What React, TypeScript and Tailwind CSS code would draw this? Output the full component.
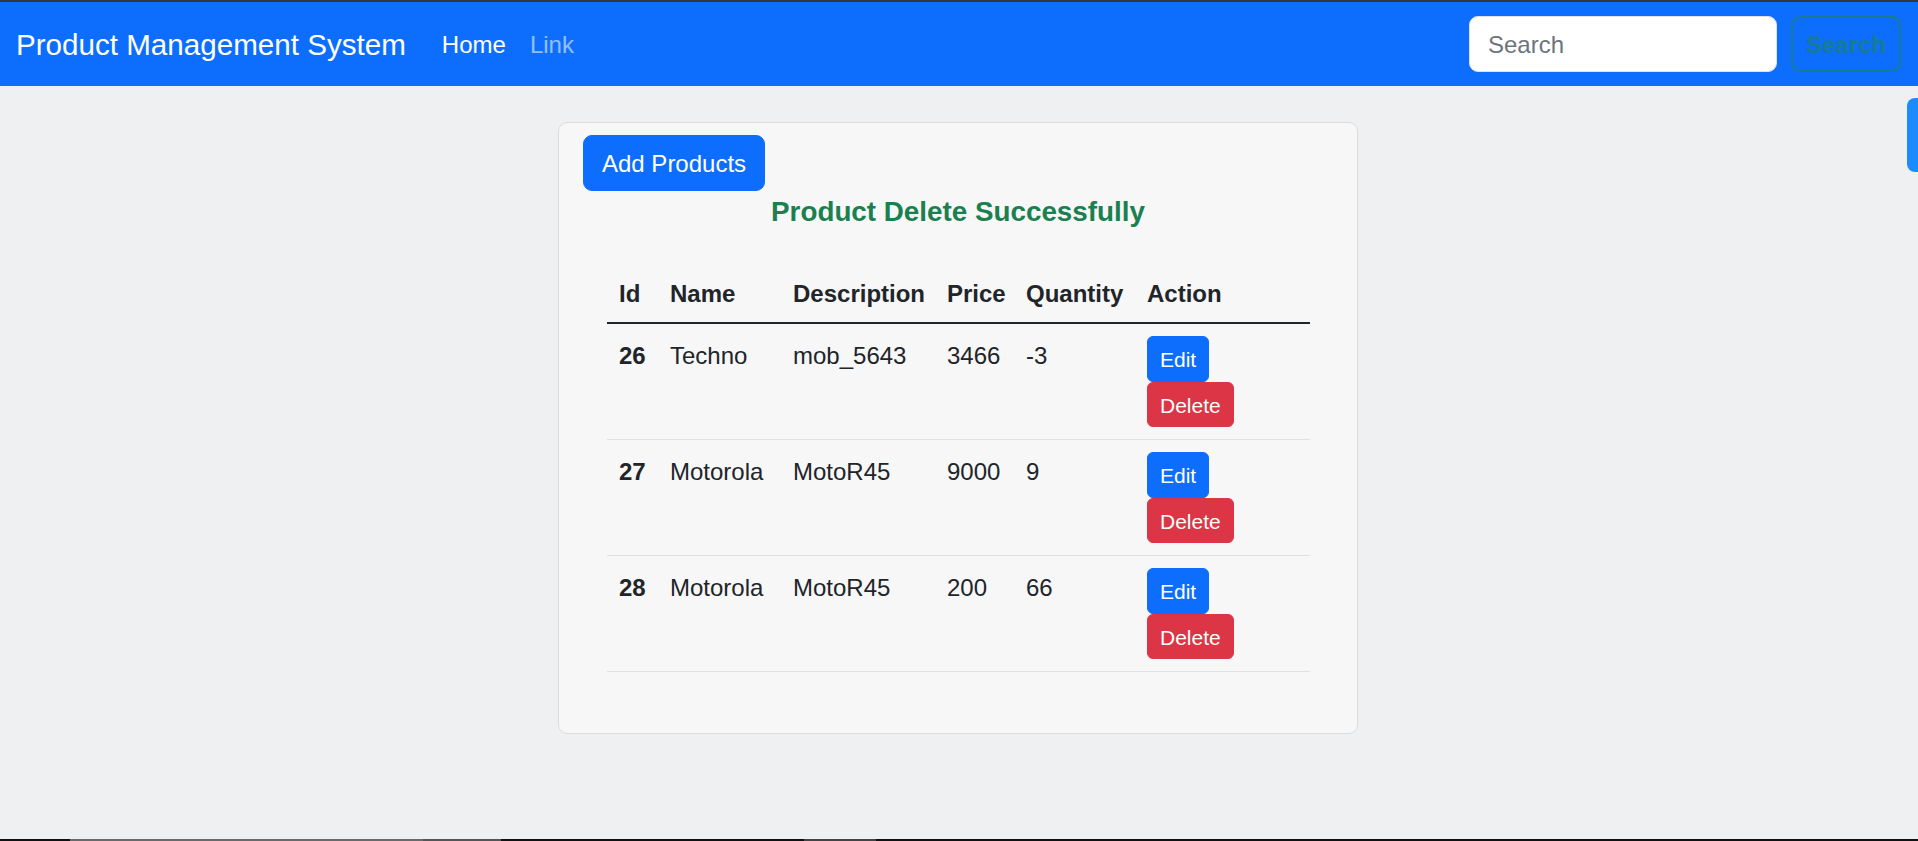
import React from "react";

type Product = {
  id: number;
  name: string;
  description: string;
  price: number;
  quantity: number;
};

const products: Product[] = [
  { id: 26, name: "Techno", description: "mob_5643", price: 3466, quantity: -3 },
  { id: 27, name: "Motorola", description: "MotoR45", price: 9000, quantity: 9 },
  { id: 28, name: "Motorola", description: "MotoR45", price: 200, quantity: 66 },
];

export default function App() {
  return (
    <div className="relative min-h-screen bg-[#eff0f2] font-['Liberation_Sans',Arial,sans-serif] text-[24px] leading-[1.5] text-[#212529]">
      <div className="h-[2px] bg-[#34383e]" />

      {/* Navbar */}
      <nav className="flex h-[84px] items-center bg-[#0d6efd] pl-4 pr-[17px]">
        <span className="pt-[2px] text-[29.6px] leading-[1.5] text-white">Product Management System</span>
        <ul className="ml-6 flex pt-[2px]">
          <li>
            <a href="#" className="block px-3 text-white">
              Home
            </a>
          </li>
          <li>
            <a href="#" className="block px-3 text-white/55">
              Link
            </a>
          </li>
        </ul>
        <form className="ml-auto flex gap-[14px]" onSubmit={(e) => e.preventDefault()}>
          <input
            type="search"
            placeholder="Search"
            className="h-[56px] w-[308px] rounded-[9px] border border-[#dee2e6] bg-white px-[18px] pt-[2px] text-[24px] text-[#212529] placeholder:text-[#6c757d] focus:outline-none"
          />
          <button
            type="submit"
            className="h-[56px] w-[110px] rounded-[9px] border-2 border-[#167c94] pt-[2px] text-[24px] font-bold text-[#167c94]"
          >
            Search
          </button>
        </form>
      </nav>

      {/* Content */}
      <main className="flex justify-center pt-9">
        <div className="ml-[-2px] w-[800px] rounded-[9px] border border-[#dcdcdc] bg-[#f7f7f7] px-6 pb-[61px] pt-3">
          <button className="h-[56px] rounded-[9px] border border-[#0d6efd] bg-[#0d6efd] px-[18px] pt-[2px] text-[24px] text-white">
            Add Products
          </button>
          <h4 className="mt-[2px] pt-[2px] text-center text-[27.8px] leading-[33px] font-bold text-[#1a8050]">
            Product Delete Successfully
          </h4>

          <div className="mt-[34px] px-6">
            <table className="w-[703px] table-fixed border-collapse text-left">
              <colgroup>
                <col className="w-[51px]" />
                <col className="w-[123px]" />
                <col className="w-[154px]" />
                <col className="w-[79px]" />
                <col className="w-[121px]" />
                <col className="w-[175px]" />
              </colgroup>
              <thead>
                <tr className="border-b-2 border-[#212529]">
                  {["Id", "Name", "Description", "Price", "Quantity", "Action"].map((h) => (
                    <th key={h} className="whitespace-nowrap px-3 pb-[10px] pt-[14px] font-bold">
                      {h}
                    </th>
                  ))}
                </tr>
              </thead>
              <tbody>
                {products.map((p) => (
                  <tr key={p.id} className="border-b border-[#dee2e6]">
                    <td className="px-3 pt-[14px] align-top font-bold">{p.id}</td>
                    <td className="whitespace-nowrap px-3 pt-[14px] align-top">{p.name}</td>
                    <td className="whitespace-nowrap px-3 pt-[14px] align-top">{p.description}</td>
                    <td className="px-3 pt-[14px] align-top">{p.price}</td>
                    <td className="px-3 pt-[14px] align-top">{p.quantity}</td>
                    <td className="p-3 align-top">
                      <div className="flex flex-col items-start">
                        <button className="rounded-[6px] border border-[#0d6efd] bg-[#0d6efd] px-3 pb-[5px] pt-[7px] text-[21px] leading-[1.5] text-white">
                          Edit
                        </button>
                        <button className="rounded-[6px] border border-[#dc3545] bg-[#dc3545] px-3 pb-[5px] pt-[7px] text-[21px] leading-[1.5] text-white">
                          Delete
                        </button>
                      </div>
                    </td>
                  </tr>
                ))}
              </tbody>
            </table>
          </div>
        </div>
      </main>

      {/* side tab peeking at right edge */}
      <div className="absolute right-0 top-[98px] h-[74px] w-[11px] rounded-l-[8px] bg-[#1a8cff]" />

      {/* bottom strip */}
      <div className="fixed inset-x-0 bottom-0 flex h-[2px] bg-[#111]">
        <div className="ml-[70px] w-[353px] bg-[#6a6a6a]" />
        <div className="w-[78px] bg-[#555]" />
        <div className="ml-[303px] w-[72px] bg-[#444]" />
      </div>
    </div>
  );
}
